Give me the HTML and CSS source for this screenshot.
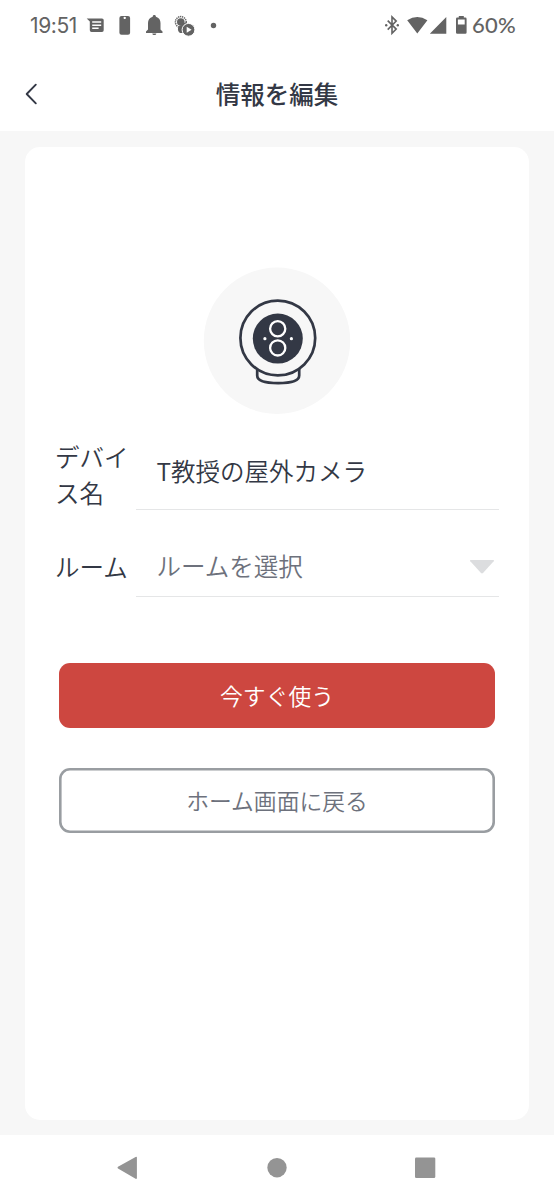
FILE: index.html
```html
<!DOCTYPE html>
<html lang="ja">
<head>
<meta charset="utf-8">
<title>情報を編集</title>
<link rel="stylesheet" href="styles.css">
</head>
<body>
<div class="screen">
  <div class="status">
    <span class="time">19:51</span>
    <svg class="status-left" width="136" height="30" viewBox="84 10 136 30" fill="#636363">
      <path fill-rule="evenodd" d="M86.700 18.400H102q1.700 0 1.700 1.700v10.200q0 1.700-1.700 1.700H91.500q-1.700 0-1.700-1.700V21.600ZM92.200 21.300v1.500h9v-1.500ZM92.200 24.400v1.500h9v-1.500ZM92.200 27.500v1.500h6.400v-1.500Z"/>
      <path fill-rule="evenodd" d="M121.500 16h6.500q2.100 0 2.100 2.100v14.600q0 2.100-2.100 2.100h-6.500q-2.100 0-2.100-2.100V18.100q0-2.100 2.100-2.100ZM124.700 16.700a1.200 1.200 0 1 0 .01 0Z"/>
      <path d="M154.300 15.100c1 0 1.600.7 1.600 1.600 3.200.8 4.600 3.200 4.600 6.400v6.500l2 2v1.500h-16.500v-1.500l2-2v-6.500c0-3.200 1.500-5.600 4.700-6.400 0-.9.600-1.600 1.600-1.600ZM152.300 33.400h4c0 2.100-4 2.100-4 0Z"/>
      <circle cx="180.800" cy="22" r="5.400" fill="none" stroke="#636363" stroke-width="1.500" stroke-dasharray="1.300 .7"/>
      <circle cx="180.800" cy="22" r="3.800"/>
      <path d="M178 28.300q1-3.600 4.400-3.400 2-3.300 5-2 2.500 1 2.300 3.500l-4.500 6.700h-5q-2.700-1.500-2.200-4.800Z"/>
      <circle cx="188.500" cy="29.800" r="6.400" stroke="#fff"/>
      <path d="m186.700 26.800 4.900 3-4.900 3Z" fill="#fff"/>
      <circle cx="213.500" cy="25.500" r="2.700"/>
    </svg>
    <svg class="status-right" width="88" height="30" viewBox="382 10 88 30" fill="#636363">
      <path d="m387.700 20.600 8.500 8.500-4.200 4.200V16.900l4.200 4.200-8.500 8.500" fill="none" stroke="#636363" stroke-width="1.600"/>
      <circle cx="386.200" cy="25.300" r="1.200"/><circle cx="397.800" cy="25.300" r="1.200"/>
      <path d="M407.200 20.300q10.100-6.600 20.200 0L417.300 33.600ZM429.800 33.800 446.300 17V33.800Z"/>
      <path fill-rule="evenodd" d="M458.800 16h5v1.600h1.500q1.300 0 1.300 1.300v13.600q0 1.300-1.300 1.300h-8q-1.300 0-1.300-1.300V18.900q0-1.300 1.300-1.300h1.500ZM457.900 19.500v5.100h6.800v-5.100Z"/>
    </svg>
    <span class="percent">60%</span>
  </div>
  <header class="header">
    <svg class="back" width="14" height="22" viewBox="0 0 14 22" fill="none" stroke="#333845" stroke-width="1.900" stroke-linecap="round" stroke-linejoin="round"><path d="M11.800 1.700 2.700 11l9.100 9.300"/></svg>
    <h1 class="title">情報を編集</h1>
  </header>
  <main class="content">
    <section class="card">
      <svg class="camera" width="148" height="148" viewBox="203 267 148 148" fill="none" stroke="#333845" stroke-width="2.700">
        <circle cx="277" cy="340.700" r="73.200" fill="#f7f7f7" stroke="none"/>
        <path d="M257.200 369v6.500q0 7.600 21 7.600t21-7.600V369"/>
        <circle cx="277.800" cy="338" r="37.400" fill="#f7f7f7"/>
        <circle cx="277.800" cy="338.600" r="25" fill="#333845" stroke="none"/>
        <g stroke="#fff" stroke-width="2.300"><circle cx="277.700" cy="328.700" r="7.600"/><circle cx="277.700" cy="347.900" r="7.600"/></g>
        <g fill="#fff" stroke="none"><circle cx="264.900" cy="338.700" r="1.600"/><circle cx="291.400" cy="338.700" r="1.600"/></g>
      </svg>
      <div class="row row-name">
        <span class="label">デバイス名</span>
        <div class="field"><span>T教授の屋外カメラ</span></div>
      </div>
      <div class="row row-room">
        <span class="label">ルーム</span>
        <div class="field placeholder">
          <span>ルームを選択</span>
          <svg class="caret" width="26" height="16" viewBox="0 0 26 16"><path d="M1.700 1H24.300q1.300.1.400 1.300L14 14q-1 .9-2 0L1.300 2.300Q.4 1.100 1.700 1Z" fill="#dcdddf"/></svg>
        </div>
      </div>
      <button class="button primary">今すぐ使う</button>
      <button class="button secondary">ホーム画面に戻る</button>
    </section>
  </main>
  <nav class="nav">
    <svg width="554" height="65" viewBox="0 1135 554 65" fill="#949494">
      <path d="M118 1166.800 135.600 1156.900q1.300-.6 1.300.6v20.600q0 1.200-1.300.6L118 1168.600q-1.100-.9 0-1.800Z"/>
      <circle cx="277" cy="1167.700" r="9.700"/>
      <rect x="415" y="1157.400" width="20.300" height="20.600" rx="1.300"/>
    </svg>
  </nav>
</div>
</body>
</html>
```
FILE: styles.css
```css
* { box-sizing: border-box; }
body {
  margin: 0;
  background: #fff;
  color: #333845;
  font-family: "Noto Sans CJK JP", sans-serif;
}
.screen {
  display: flex;
  flex-direction: column;
  width: 554px;
  height: 1200px;
  overflow: hidden;
}
.status {
  display: flex;
  align-items: center;
  height: 50px;
  padding-left: 30px;
  color: #636363;
}
.time {
  width: 54px;
  padding-top: 2px;
  font: 400 21px/30px Inter, sans-serif;
  letter-spacing: -.4px;
}
.status-left { margin-right: 162px; }
.status-right { margin-right: 2px; }
.status svg { flex: none; }
.percent {
  font: 500 22px/30px Lato, sans-serif;
  letter-spacing: .3px;
}
.header {
  display: grid;
  grid-template-columns: 54px 1fr 54px;
  align-items: center;
  height: 81px;
  padding-top: 6px;
}
.back { margin-left: 24px; }
.title {
  margin: 0;
  font-size: 24.500px;
  line-height: 36px;
  font-weight: 500;
  text-align: center;
}
.content {
  flex: 1;
  display: flex;
  padding: 15.500px 24.700px 15.300px;
  background: #f7f7f7;
}
.card {
  flex: 1;
  display: flex;
  flex-direction: column;
  padding: 120.500px 30.300px 0;
  border-radius: 15px;
  background: #fff;
}
.camera { align-self: center; flex: none; }
.row {
  display: flex;
  align-items: center;
  font-size: 24.500px;
  line-height: 36px;
  font-weight: 350;
}
.row-name { height: 85px; margin-top: 10px; }
.row-name .field { padding-top: 8px; }
.row-name .label { padding: 15px 6px 0 0; }
.row-room { height: 61px; margin-top: 26px; }
.label { width: 81px; flex: none; }
.field {
  display: flex;
  align-items: center;
  justify-content: space-between;
  flex: 1;
  align-self: stretch;
  padding: 0 4px 0 20.500px;
  border-bottom: 1px solid #e5e6e7;
}
.caret { margin-top: 2px; }
.placeholder { color: #6d717c; }
.button {
  flex: none;
  height: 65px;
  margin: 0 4.500px;
  border: 0;
  border-radius: 11px;
  font: 350 22.800px/34px "Noto Sans CJK JP", sans-serif;
}
.primary {
  margin-top: 66px;
  background: #cd4740;
  color: #fff;
}
.secondary {
  margin-top: 40px;
  background: #fff;
  box-shadow: inset 0 0 0 2.600px #999da1;
  color: #6d717c;
}
.nav { height: 65px; }
.nav svg { display: block; }
```
